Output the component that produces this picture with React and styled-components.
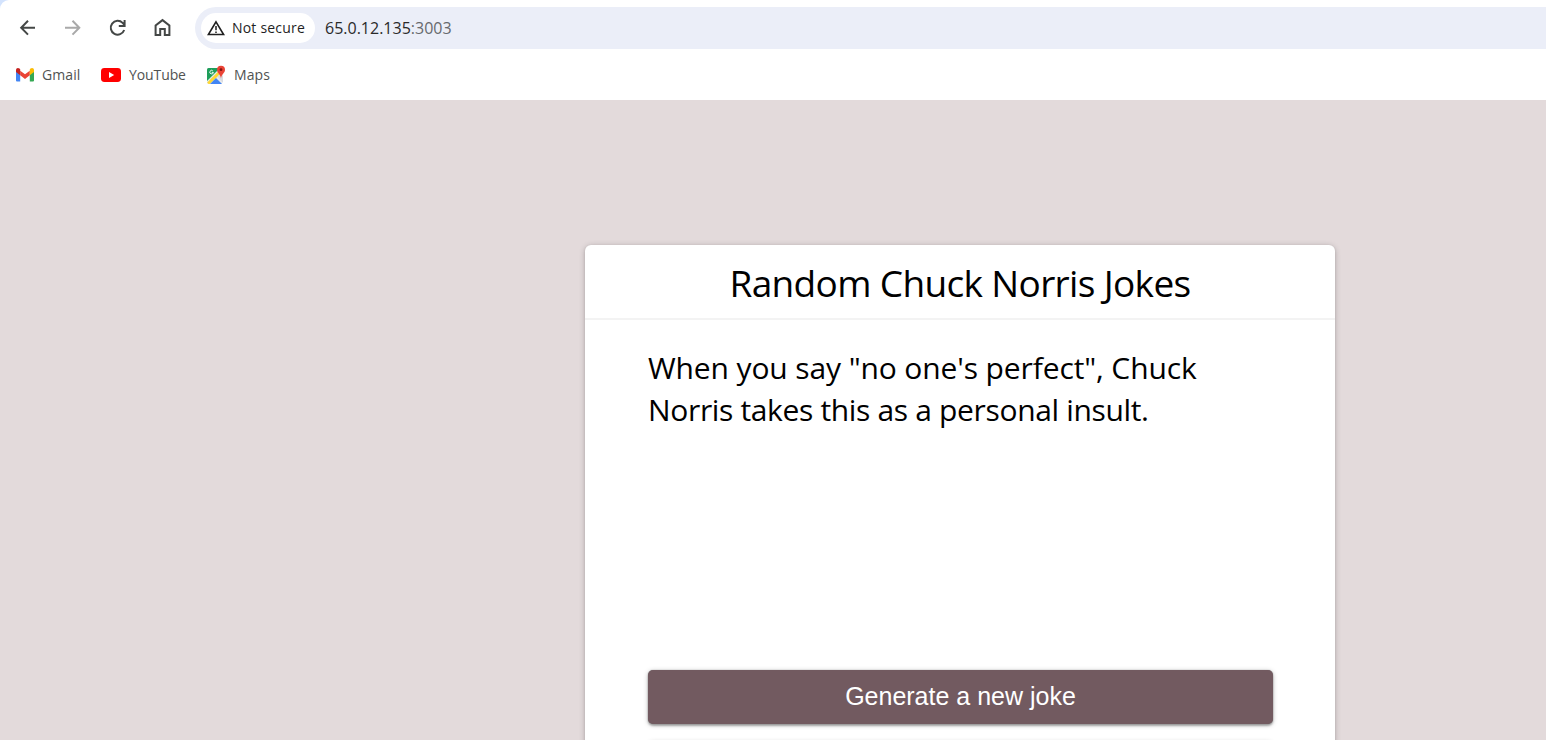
import React from "react";
import styled, { createGlobalStyle } from "styled-components";

const GlobalStyle = createGlobalStyle`
  * { box-sizing: border-box; }
  html, body { margin: 0; padding: 0; overflow: hidden; }
  body { font-family: "Segoe UI", "Open Sans", "Noto Sans", sans-serif; background: #fff; }
`;

const Window = styled.div`
  display: flex;
  flex-direction: column;
  height: 740px;
  overflow: hidden;
  background: #d3e3fd;
`;

const Chrome = styled.header`
  flex: none;
  height: 100px;
  background: #fff;
  border-top-left-radius: 9px;
`;

const Toolbar = styled.div`
  display: flex;
  align-items: center;
  height: 56px;
  padding-left: 16px;
`;

const NavButtons = styled.nav`
  display: flex;
  gap: 21px;
  width: 179px;
`;

const NavIcon = styled.svg`
  display: block;
  flex: none;
  width: 24px;
  height: 24px;
  fill: none;
  stroke: ${(p) => (p.$muted ? "#a9a9a9" : "#444746")};
  stroke-width: 2;
`;

const AddressBar = styled.div`
  display: flex;
  align-items: center;
  flex: 1;
  height: 42px;
  padding-left: 6px;
  border-radius: 21px 0 0 21px;
  background: #ebeef8;
`;

const SecurityChip = styled.div`
  display: flex;
  align-items: center;
  width: 114px;
  height: 30px;
  padding-left: 6px;
  gap: 7px;
  border-radius: 15px;
  background: #fff;
  color: #1f1f1f;
  font-size: 14px;
  font-weight: 500;
  white-space: nowrap;
  letter-spacing: 0.2px;
`;

const ChipLabel = styled.span`
  padding-bottom: 2px;
`;

const WarningIcon = styled.svg`
  flex: none;
  width: 18px;
  height: 16px;
`;

const Url = styled.span`
  margin-left: 10px;
  color: #2a2a2a;
  font-size: 16px;
`;

const Port = styled.span`
  color: #66696d;
`;

const Bookmarks = styled.div`
  display: flex;
  align-items: center;
  height: 38px;
  padding-left: 15px;
`;

const Bookmark = styled.div`
  display: flex;
  align-items: center;
  width: ${(p) => p.$width}px;
  gap: ${(p) => p.$gap}px;
  color: #505352;
  font-size: 14px;
  letter-spacing: ${(p) => p.$tracking}px;
`;

const BookmarkLabel = styled.span`
  padding-bottom: 2px;
`;

const BookmarkIcon = styled.svg`
  display: block;
  flex: none;
`;

const Page = styled.main`
  flex: 1;
  display: flex;
  align-items: flex-start;
  padding: 145px 0 0 585px;
  background: #e3dadb;
  overflow: hidden;
`;

const Card = styled.section`
  flex: none;
  width: 750px;
  height: 640px;
  border-radius: 6px;
  background: #fff;
  box-shadow: 0 1px 6px rgba(0, 0, 0, 0.2), 0 1px 3px rgba(0, 0, 0, 0.12);
`;

const CardTitle = styled.h1`
  display: flex;
  align-items: center;
  justify-content: center;
  height: 75px;
  margin: 0;
  padding-top: 2px;
  border-bottom: 2px solid #f3f3f3;
  color: #000;
  font-size: 37px;
  font-weight: 400;
  letter-spacing: -0.65px;
  white-space: nowrap;
`;

const CardBody = styled.div`
  display: flex;
  flex-direction: column;
  gap: 14px;
  padding: 27px 62px 0 63px;
`;

const Joke = styled.p`
  height: 309px;
  margin: 0;
  color: #000;
  font-size: 30px;
  line-height: 42px;
  white-space: nowrap;
`;

const JokeLine = styled.span`
  display: block;
  letter-spacing: ${(p) => p.$tracking}px;
`;

const Button = styled.button`
  flex: none;
  height: 54px;
  padding: 0 0 1px;
  border: 0;
  border-radius: 5px;
  background: #725a60;
  color: #fff;
  font-family: "Liberation Sans", Arial, sans-serif;
  font-size: 25px;
  box-shadow: 0 1px 5px rgba(0, 0, 0, 0.25), 0 2px 2px rgba(0, 0, 0, 0.25), 0 0 1px rgba(0, 0, 0, 0.4);
`;

const SecondaryButton = styled(Button)`
  margin-top: 3px;
  box-shadow: 0 1px 5px rgba(0, 0, 0, 0.2);
`;

export default function App() {
  return (
    <Window>
      <GlobalStyle />
      <Chrome>
        <Toolbar>
          <NavButtons>
            <NavIcon viewBox="0 0 24 24">
              <path d="M19 11.7H5.5M12 4.8 5.2 11.7 12 18.6" />
            </NavIcon>
            <NavIcon viewBox="0 0 24 24" $muted>
              <path d="M4 11.7H18M11.5 4.8 18.3 11.7 11.5 18.6" />
            </NavIcon>
            <NavIcon viewBox="0 0 24 24">
              <path d="M18.2 14A6.9 6.9 0 1 1 16.6 6.9L18.6 9.1M12.8 9.9H18.6V4" />
            </NavIcon>
            <NavIcon viewBox="0 0 24 24">
              <path d="M4.6 19V9.5L11.5 4.1 18.4 9.5V19H13.8V13H9.2V19Z" />
            </NavIcon>
          </NavButtons>
          <AddressBar>
            <SecurityChip>
              <WarningIcon viewBox="0 0 18 16">
                <path d="M9 1.8 16.6 14.5H1.4Z" fill="none" stroke="#1f1f1f" strokeWidth="1.6" />
                <path d="M9 6V10.2M9 11.4V13" stroke="#1f1f1f" strokeWidth="1.5" />
              </WarningIcon>
              <ChipLabel>Not secure</ChipLabel>
            </SecurityChip>
            <Url>
              65.0.12.135<Port>:3003</Port>
            </Url>
          </AddressBar>
        </Toolbar>
        <Bookmarks>
          <Bookmark $width={86} $gap={7} $tracking={0.1}>
            <BookmarkIcon width="20" height="16" viewBox="0 0 20 16">
              <path d="M1 4V13.5Q1 14.5 2 14.5H5.2V7Z" fill="#4285f4" />
              <path d="M14.8 7V14.5H18Q19 14.5 19 13.5V4Z" fill="#34a853" />
              <path d="M5.2 3.8 10 7.3 14.8 3.8V8.3L10 12 5.2 8.3Z" fill="#ea4335" />
              <path d="M1 5V3.1C1 1 3.1.5 4.5 1.6L5.2 2.2V8.3L1 5.1Z" fill="#c5221f" />
              <path d="M19 5V3.1C19 1 16.9.5 15.5 1.6L14.8 2.2V8.3L19 5.1Z" fill="#fbbc04" />
            </BookmarkIcon>
            <BookmarkLabel>Gmail</BookmarkLabel>
          </Bookmark>
          <Bookmark $width={105} $gap={8} $tracking={-0.1}>
            <BookmarkIcon width="20" height="14" viewBox="0 0 20 14">
              <rect width="20" height="14" rx="3.4" fill="#f00" />
              <path d="M8 4 13.2 7 8 10Z" fill="#fff" />
            </BookmarkIcon>
            <BookmarkLabel>YouTube</BookmarkLabel>
          </Bookmark>
          <Bookmark $width={80} $gap={8} $tracking={0.1}>
            <BookmarkIcon width="20" height="20" viewBox="0 0 20 20">
              <path d="M2.5 3H16V19H2.5Q1 19 1 17.5V4.5Q1 3 2.5 3Z" fill="#e8eaed" />
              <path d="M2.5 3H14L1 16V4.5Q1 3 2.5 3Z" fill="#1e9e5a" />
              <path d="M1.2 17.6 13 5.8 15.2 8 3.8 19H2.5Z" fill="#fdd835" />
              <path d="M4 19 10 13 16 19Z" fill="#4285f4" />
              <path d="M11.5 11.5 15 8 17 11V18Z" fill="#dadce0" />
              <path d="M6.8 5.8A1.8 1.8 0 1 0 7.4 7.4H5.8" fill="none" stroke="#fff" strokeWidth="0.9" />
              <path d="M15 .7A4 4 0 0 1 19 4.7C19 8 15.4 9 15 13.5 14.6 9 11 8 11 4.7A4 4 0 0 1 15 .7Z" fill="#ea4335" />
              <circle cx="15" cy="4.7" r="1.4" fill="#811411" />
            </BookmarkIcon>
            <BookmarkLabel>Maps</BookmarkLabel>
          </Bookmark>
        </Bookmarks>
      </Chrome>
      <Page>
        <Card>
          <CardTitle>Random Chuck Norris Jokes</CardTitle>
          <CardBody>
            <Joke>
              <JokeLine $tracking={-0.12}>When you say "no one's perfect", Chuck</JokeLine>
              <JokeLine $tracking={-0.34}>Norris takes this as a personal insult.</JokeLine>
            </Joke>
            <Button>Generate a new joke</Button>
            <SecondaryButton aria-label="Next" />
          </CardBody>
        </Card>
      </Page>
    </Window>
  );
}
